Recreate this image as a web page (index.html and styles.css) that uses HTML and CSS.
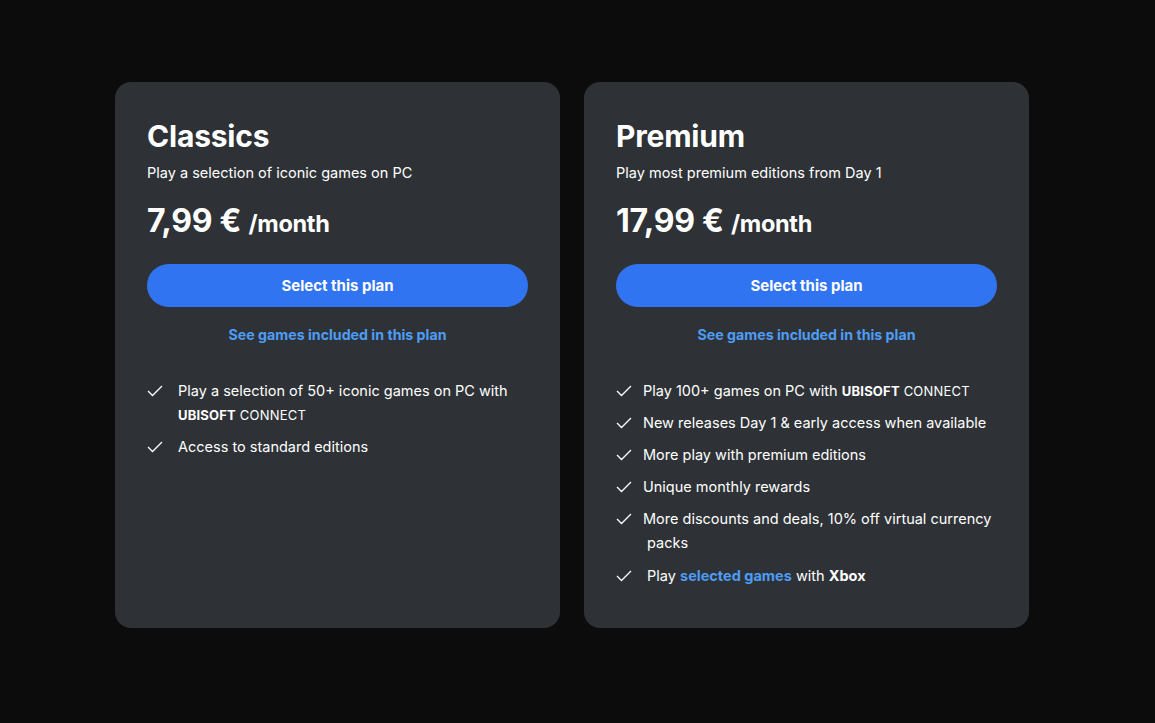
FILE: index.html
```html
<!DOCTYPE html>
<html lang="en">

<head>
    <meta charset="UTF-8">
    <meta name="viewport" content="width=device-width, initial-scale=1.0">
    <title>Ubisoft+ Plans</title>
    <link rel="stylesheet" href="styles.css">
</head>

<body>
    <div class="plans">
        <div class="plan">
            <h2 class="plan-title">Classics</h2>
            <p class="plan-desc">Play a selection of iconic games on PC</p>
            <p class="plan-price">7,99 € <span class="per">/month</span></p>
            <button class="select-btn">Select this plan</button>
            <a class="games-link" href="#">See games included in this plan</a>
            <ul class="features features-wide">
                <li>
                    <svg class="check" viewBox="0 0 16 12"><polyline points="1,6 5.5,10.5 15,1" /></svg>
                    <span>Play a selection of 50+ iconic games on PC with <span class="brand"><b>UBISOFT</b> CONNECT</span></span>
                </li>
                <li>
                    <svg class="check" viewBox="0 0 16 12"><polyline points="1,6 5.5,10.5 15,1" /></svg>
                    <span>Access to standard editions</span>
                </li>
            </ul>
        </div>

        <div class="plan">
            <h2 class="plan-title">Premium</h2>
            <p class="plan-desc">Play most premium editions from Day 1</p>
            <p class="plan-price">17,99 € <span class="per">/month</span></p>
            <button class="select-btn">Select this plan</button>
            <a class="games-link" href="#">See games included in this plan</a>
            <ul class="features">
                <li>
                    <svg class="check" viewBox="0 0 16 12"><polyline points="1,6 5.5,10.5 15,1" /></svg>
                    <span>Play 100+ games on PC with <span class="brand"><b>UBISOFT</b> CONNECT</span></span>
                </li>
                <li>
                    <svg class="check" viewBox="0 0 16 12"><polyline points="1,6 5.5,10.5 15,1" /></svg>
                    <span>New releases Day 1 &amp; early access when available</span>
                </li>
                <li>
                    <svg class="check" viewBox="0 0 16 12"><polyline points="1,6 5.5,10.5 15,1" /></svg>
                    <span>More play with premium editions</span>
                </li>
                <li>
                    <svg class="check" viewBox="0 0 16 12"><polyline points="1,6 5.5,10.5 15,1" /></svg>
                    <span>Unique monthly rewards</span>
                </li>
                <li>
                    <svg class="check" viewBox="0 0 16 12"><polyline points="1,6 5.5,10.5 15,1" /></svg>
                    <span>More discounts and deals, 10% off virtual currency<br>&nbsp;packs</span>
                </li>
                <li class="xbox">
                    <svg class="check" viewBox="0 0 16 12"><polyline points="1,6 5.5,10.5 15,1" /></svg>
                    <span>&nbsp;Play <a href="#">selected games</a> with <b>Xbox</b></span>
                </li>
            </ul>
        </div>
    </div>
</body>

</html>
```

FILE: styles.css
```css
body {
    margin: 0;
    background-color: #0c0c0c;
    color: #fff;
    font-family: Inter, "Noto Sans", sans-serif;
}

.plans {
    display: flex;
    gap: 24px;
    padding: 82px 0 0 115px;
}

.plan {
    width: 445px;
    height: 546px;
    box-sizing: border-box;
    padding: 36px 32px 0;
    background-color: #2e3236;
    border-radius: 16px;
    display: flex;
    flex-direction: column;
}

.plan-title {
    margin: 0;
    font-size: 30px;
    font-weight: 700;
    line-height: 36px;
    letter-spacing: -0.2px;
}

.plan-desc {
    margin: 9px 0 0;
    font-size: 14.5px;
    line-height: 20px;
}

.plan-price {
    margin: 18px 0 0;
    font-size: 32px;
    font-weight: 700;
    line-height: 40px;
    letter-spacing: -0.3px;
}

.per {
    font-size: 23.5px;
}

.select-btn {
    margin-top: 20px;
    height: 43px;
    border: none;
    border-radius: 22px;
    background-color: #3174f1;
    color: #fff;
    font-family: inherit;
    font-size: 15px;
    font-weight: 700;
}

.games-link {
    margin-top: 19px;
    text-align: center;
    color: #4d9df6;
    font-size: 14.2px;
    font-weight: 700;
    text-decoration: none;
    line-height: 18px;
}

.features {
    list-style: none;
    margin: 35px 0 0;
    padding: 0;
    display: flex;
    flex-direction: column;
    gap: 8px;
    font-size: 14.5px;
    line-height: 24px;
}

.features li {
    display: flex;
    gap: 11px;
}

.features-wide li {
    gap: 15px;
}

.check {
    flex: none;
    width: 16px;
    height: 12px;
    margin-top: 6px;
    fill: none;
    stroke: #fff;
    stroke-width: 1.3;
}

.brand {
    font-size: 13px;
    letter-spacing: 0.2px;
}

.features a {
    color: #4d9df6;
    font-weight: 700;
    text-decoration: none;
}

.xbox {
    margin-top: 1px;
}
```
